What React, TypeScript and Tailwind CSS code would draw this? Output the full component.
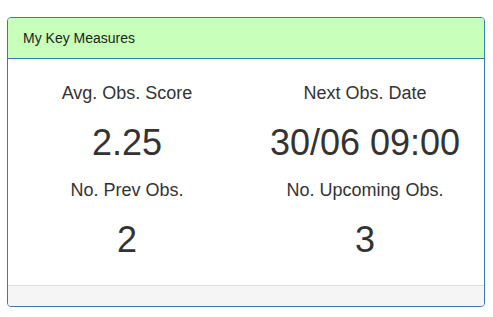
import React from 'react'

// ─── TYPES ────────────────────────────────────────────────

interface Measure {
  label: string
  value: string
}

// ─── CONSTANTS ────────────────────────────────────────────

const MEASURE_ROWS: Measure[][] = [
  [
    { label: 'Avg. Obs. Score', value: '2.25' },
    { label: 'Next Obs. Date', value: '30/06 09:00' },
  ],
  [
    { label: 'No. Prev Obs.', value: '2' },
    { label: 'No. Upcoming Obs.', value: '3' },
  ],
]

// ─── COMPONENTS ───────────────────────────────────────────

function MeasureCell({ label, value }: Measure) {
  return (
    <div className="flex flex-col items-center text-[#333]">
      <div className="text-[18px] leading-[20px] whitespace-nowrap">{label}</div>
      <div className="mt-[20px] text-[36px] leading-[40px] whitespace-nowrap">{value}</div>
    </div>
  )
}

export default function App() {
  return (
    <div
      className="min-h-[317px] w-[493px] bg-white pt-[17px] pl-[7px]"
      style={{ fontFamily: '"Liberation Sans", Arial, sans-serif' }}
    >
      {/* Panel */}
      <div className="w-[478px] overflow-hidden rounded-[4px] border border-[#337ab7] bg-white">
        {/* Heading */}
        <div className="border-b border-[#337ab7] bg-[#c8ffba] px-[15px] py-[10px] text-[14px] leading-[20px] text-[#222]">
          My Key Measures
        </div>

        {/* Body */}
        <div className="flex flex-col gap-[17px] pt-[24px] pb-[25px]">
          {MEASURE_ROWS.map((row, i) => (
            <div key={i} className="grid grid-cols-2">
              {row.map((m) => (
                <MeasureCell key={m.label} label={m.label} value={m.value} />
              ))}
            </div>
          ))}
        </div>

        {/* Footer */}
        <div className="h-[21px] border-t border-[#ddd] bg-[#f5f5f5]" />
      </div>
    </div>
  )
}
